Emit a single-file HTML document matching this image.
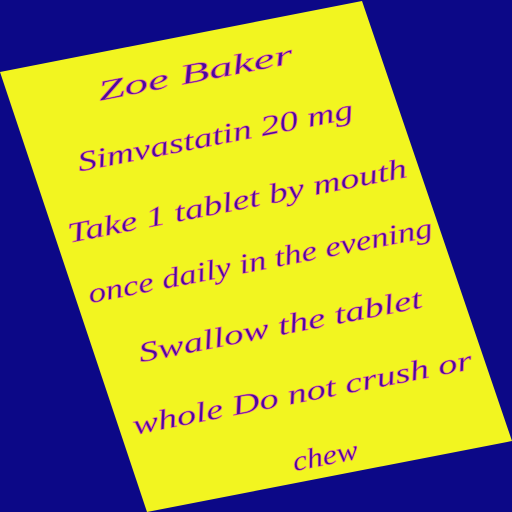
<!DOCTYPE html>
<html><head><style>html,body{margin:0;padding:0;background:#0c0887;width:512px;height:512px;overflow:hidden}</style></head>
<body>
<svg width="512" height="512" viewBox="0 0 512 512" xmlns="http://www.w3.org/2000/svg">
<rect width="512" height="512" fill="#0c0887"/>
<polygon points="0,72 362,1 512,441 147,512" fill="#f2f520"/>
<g font-family="'Liberation Serif', serif" font-style="italic" font-size="28" fill="#4a0a9e" stroke="#e0609a" stroke-width="0.6" text-anchor="middle">
<text x="195" y="82" transform="rotate(-11 195 72)" textLength="198" lengthAdjust="spacingAndGlyphs">Zoe Baker</text>
<text x="215" y="145" transform="rotate(-11 215 135)" textLength="280" lengthAdjust="spacingAndGlyphs">Simvastatin 20 mg</text>
<text x="237" y="210" transform="rotate(-11 237 200)" textLength="345" lengthAdjust="spacingAndGlyphs">Take 1 tablet by mouth</text>
<text x="260" y="270" transform="rotate(-11 260 260)" textLength="350" lengthAdjust="spacingAndGlyphs">once daily in the evening</text>
<text x="280" y="335" transform="rotate(-11 280 325)" textLength="288" lengthAdjust="spacingAndGlyphs">Swallow the tablet</text>
<text x="302" y="402" transform="rotate(-11 302 392)" textLength="345" lengthAdjust="spacingAndGlyphs">whole Do not crush or</text>
<text x="325" y="465" transform="rotate(-11 325 455)" textLength="66" lengthAdjust="spacingAndGlyphs">chew</text>
</g>
</svg>
</body></html>
